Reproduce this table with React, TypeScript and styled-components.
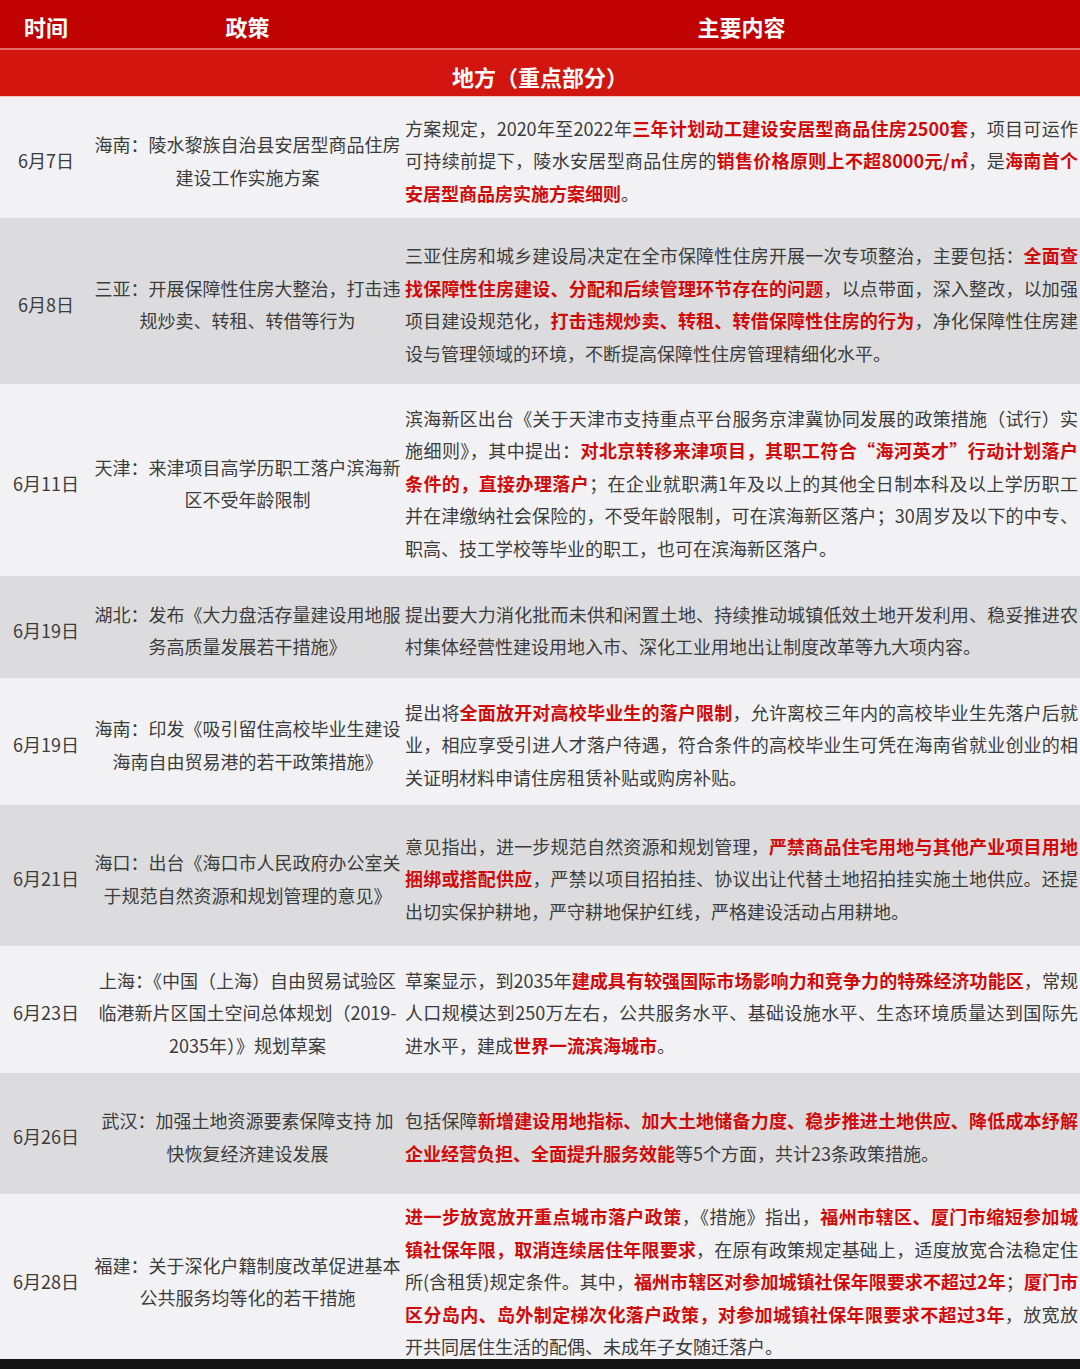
import React from "react";
import styled, { createGlobalStyle } from "styled-components";

const GlobalStyle = createGlobalStyle`
  html, body {
    margin: 0;
    padding: 0;
    background: #ffffff;
  }
  body {
    font-family: "Noto Sans CJK SC", "Noto Sans", sans-serif;
    color: #3c3c3c;
  }
`;

type Row = {
  time: string;
  policy: string[];
  content: string[];
  height: number;
};

// 内容里用 * 包住的片段是红色重点
const rows: Row[] = [
  {
    time: "6月7日",
    height: 121,
    policy: ["海南：陵水黎族自治县安居型商品住房", "建设工作实施方案"],
    content: [
      "方案规定，2020年至2022年*三年计划动工建设安居型商品住房2500套*，项目可运作",
      "可持续前提下，陵水安居型商品住房的*销售价格原则上不超8000元/㎡*，是*海南首个*",
      "*安居型商品房实施方案细则*。",
    ],
  },
  {
    time: "6月8日",
    height: 166,
    policy: ["三亚：开展保障性住房大整治，打击违", "规炒卖、转租、转借等行为"],
    content: [
      "三亚住房和城乡建设局决定在全市保障性住房开展一次专项整治，主要包括：*全面查*",
      "*找保障性住房建设、分配和后续管理环节存在的问题*，以点带面，深入整改，以加强",
      "项目建设规范化，*打击违规炒卖、转租、转借保障性住房的行为*，净化保障性住房建",
      "设与管理领域的环境，不断提高保障性住房管理精细化水平。",
    ],
  },
  {
    time: "6月11日",
    height: 192,
    policy: ["天津：来津项目高学历职工落户滨海新", "区不受年龄限制"],
    content: [
      "滨海新区出台《关于天津市支持重点平台服务京津冀协同发展的政策措施（试行）实",
      "施细则》，其中提出：*对北京转移来津项目，其职工符合“海河英才”行动计划落户*",
      "*条件的，直接办理落户*；在企业就职满1年及以上的其他全日制本科及以上学历职工",
      "并在津缴纳社会保险的，不受年龄限制，可在滨海新区落户；30周岁及以下的中专、",
      "职高、技工学校等毕业的职工，也可在滨海新区落户。",
    ],
  },
  {
    time: "6月19日",
    height: 102,
    policy: ["湖北：发布《大力盘活存量建设用地服", "务高质量发展若干措施》"],
    content: [
      "提出要大力消化批而未供和闲置土地、持续推动城镇低效土地开发利用、稳妥推进农",
      "村集体经营性建设用地入市、深化工业用地出让制度改革等九大项内容。",
    ],
  },
  {
    time: "6月19日",
    height: 127,
    policy: ["海南：印发《吸引留住高校毕业生建设", "海南自由贸易港的若干政策措施》"],
    content: [
      "提出将*全面放开对高校毕业生的落户限制*，允许离校三年内的高校毕业生先落户后就",
      "业，相应享受引进人才落户待遇，符合条件的高校毕业生可凭在海南省就业创业的相",
      "关证明材料申请住房租赁补贴或购房补贴。",
    ],
  },
  {
    time: "6月21日",
    height: 141,
    policy: ["海口：出台《海口市人民政府办公室关", "于规范自然资源和规划管理的意见》"],
    content: [
      "意见指出，进一步规范自然资源和规划管理，*严禁商品住宅用地与其他产业项目用地*",
      "*捆绑或搭配供应*，严禁以项目招拍挂、协议出让代替土地招拍挂实施土地供应。还提",
      "出切实保护耕地，严守耕地保护红线，严格建设活动占用耕地。",
    ],
  },
  {
    time: "6月23日",
    height: 127,
    policy: [
      "上海：《中国（上海）自由贸易试验区",
      "临港新片区国土空间总体规划（2019-",
      "2035年）》规划草案",
    ],
    content: [
      "草案显示，到2035年*建成具有较强国际市场影响力和竞争力的特殊经济功能区*，常规",
      "人口规模达到250万左右，公共服务水平、基础设施水平、生态环境质量达到国际先",
      "进水平，建成*世界一流滨海城市*。",
    ],
  },
  {
    time: "6月26日",
    height: 121,
    policy: ["武汉：加强土地资源要素保障支持 加", "快恢复经济建设发展"],
    content: [
      "包括保障*新增建设用地指标、加大土地储备力度、稳步推进土地供应、降低成本纾解*",
      "*企业经营负担、全面提升服务效能*等5个方面，共计23条政策措施。",
    ],
  },
  {
    time: "6月28日",
    height: 165,
    policy: ["福建：关于深化户籍制度改革促进基本", "公共服务均等化的若干措施"],
    content: [
      "*进一步放宽放开重点城市落户政策*，《措施》指出，*福州市辖区、厦门市缩短参加城*",
      "*镇社保年限，取消连续居住年限要求*，在原有政策规定基础上，适度放宽合法稳定住",
      "所(含租赁)规定条件。其中，*福州市辖区对参加城镇社保年限要求不超过2年*；*厦门市*",
      "*区分岛内、岛外制定梯次化落户政策，对参加城镇社保年限要求不超过3年*，放宽放",
      "开共同居住生活的配偶、未成年子女随迁落户。",
    ],
  },
];

const Table = styled.div`
  width: 1080px;
  display: flex;
  flex-direction: column;
`;

const HeaderRow = styled.div`
  display: grid;
  grid-template-columns: 92px 311px 1fr;
  height: 48px;
  background: #c10202;
  border-bottom: 2px solid #e46a64;
  color: #ffffff;
  font-size: 22px;
  font-weight: 700;
  align-items: center;
  text-align: center;
  padding-top: 4px;
  box-sizing: border-box;
  height: 50px;
`;

const SectionRow = styled.div`
  height: 47px;
  background: #d2150e;
  border-bottom: 1px solid #efc3c0;
  box-sizing: border-box;
  color: #ffffff;
  font-size: 22px;
  font-weight: 700;
  display: flex;
  align-items: center;
  justify-content: center;
  padding-top: 6px;
`;

const BodyRow = styled.div<{ $h: number; $shade: boolean }>`
  display: grid;
  grid-template-columns: 92px 311px 1fr;
  height: ${(p) => p.$h}px;
  background: ${(p) => (p.$shade ? "#dcdcde" : "#f2f2f4")};
  align-items: center;
  padding-top: 6px;
  box-sizing: border-box;
  font-size: 18px;
  line-height: 32.5px;
  color: #3c3c3c;
`;

const TimeCell = styled.div`
  text-align: center;
  white-space: nowrap;
`;

const PolicyCell = styled.div`
  text-align: center;
  white-space: nowrap;
`;

const ContentCell = styled.div`
  padding: 0 2px;
`;

const Line = styled.div<{ $last: boolean }>`
  text-align: justify;
  text-align-last: ${(p) => (p.$last ? "left" : "justify")};
`;

const Mark = styled.span`
  color: #d10a0a;
  font-weight: 700;
`;

const Footer = styled.div`
  height: 10px;
  background: #151515;
`;

const renderLine = (line: string) =>
  line.split("*").map((part, i) =>
    i % 2 === 1 ? <Mark key={i}>{part}</Mark> : <React.Fragment key={i}>{part}</React.Fragment>
  );

const App = () => {
  return (
    <>
      <GlobalStyle />
      <Table>
        <HeaderRow>
          <div>时间</div>
          <div>政策</div>
          <div>主要内容</div>
        </HeaderRow>
        <SectionRow>地方（重点部分）</SectionRow>
        {rows.map((r, i) => (
          <BodyRow key={i} $h={r.height} $shade={i % 2 === 1}>
            <TimeCell>{r.time}</TimeCell>
            <PolicyCell>
              {r.policy.map((p, j) => (
                <div key={j}>{p}</div>
              ))}
            </PolicyCell>
            <ContentCell>
              {r.content.map((c, j) => (
                <Line key={j} $last={j === r.content.length - 1}>
                  {renderLine(c)}
                </Line>
              ))}
            </ContentCell>
          </BodyRow>
        ))}
        <Footer />
      </Table>
    </>
  );
};

export default App;
